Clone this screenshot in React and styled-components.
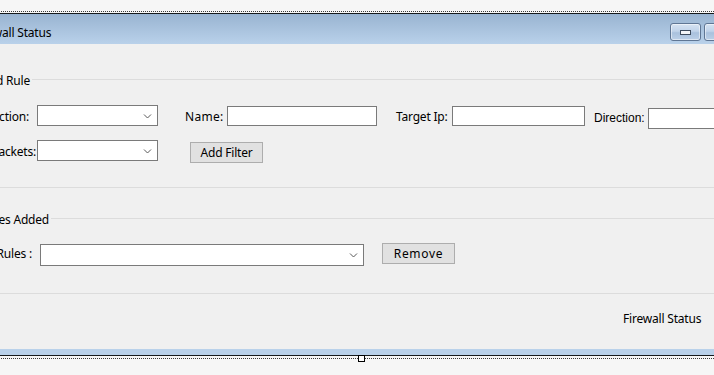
import React from "react";
import styled, { createGlobalStyle } from "styled-components";

const GlobalStyle = createGlobalStyle`
  html, body {
    margin: 0;
    padding: 0;
    background: #f6f6f6;
    overflow: hidden;
  }
  body {
    font-family: "Noto Sans", "Segoe UI", sans-serif;
    font-size: 12px;
    letter-spacing: -0.2px;
    color: #000;
  }
`;

const Designer = styled.div`
  width: 714px;
  height: 375px;
  overflow: hidden;
  padding-top: 11px;
  box-sizing: border-box;
`;

// the form is wider than the visible area; its left edge is scrolled off
const Frame = styled.div`
  width: 836px;
  margin-left: -60px;
`;

const DottedLine = styled.div`
  height: 0;
  border-top: 1px dotted #3a3a3a;
  margin-top: ${(p) => p.$mt || 0}px;
`;

const SolidLine = styled.div`
  height: 1px;
  background: #161a1c;
  margin-top: ${(p) => p.$mt || 0}px;
`;

const TitleBar = styled.div`
  height: 30px;
  display: flex;
  align-items: flex-start;
  background: linear-gradient(#99b4d1, #b9d1ea);
`;

const Title = styled.div`
  margin: 11px 0 0 33px;
  line-height: 16px;
`;

const CaptionButtons = styled.div`
  margin-left: auto;
  margin-right: 6px;
  padding-top: 9px;
  display: flex;
  gap: 3px;
`;

const CaptionButton = styled.div`
  width: ${(p) => p.$w || 31}px;
  height: 18px;
  box-sizing: border-box;
  border: 1px solid #5f7694;
  border-radius: 3px;
  background: linear-gradient(#d6e3f2 0%, #c0d3ea 45%, #a9c1dd 55%, #bcd0e8 100%);
  box-shadow: inset 0 0 0 1px rgba(255, 255, 255, 0.5);
  display: flex;
  align-items: center;
  justify-content: center;
`;

const MinGlyph = styled.div`
  width: 11px;
  height: 5px;
  box-sizing: border-box;
  border: 1px solid #3e4c5e;
  background: #f4f6f9;
  margin-top: 1px;
`;

const Body = styled.div`
  height: 305px;
  background: #f0f0f0;
  overflow: hidden;
`;

const Group = styled.div`
  margin-top: ${(p) => p.$mt}px;
  height: ${(p) => p.$h}px;
  box-sizing: border-box;
  border-bottom: 1px solid #dcdcdc;
`;

const GroupHeader = styled.div`
  height: 15px;
  display: flex;
  align-items: center;
`;

const GroupTitle = styled.div`
  width: ${(p) => p.$w}px;
  flex: none;
  text-align: right;
  line-height: 15px;
  white-space: nowrap;
  margin-top: 1px;
`;

const GroupLine = styled.div`
  flex: 1;
  height: 1px;
  margin-left: 2px;
  margin-top: -1px;
  background: #dcdcdc;
`;

const Row = styled.div`
  display: flex;
  align-items: flex-start;
  height: ${(p) => p.$h}px;
  margin-top: ${(p) => p.$mt || 0}px;
`;

const Label = styled.div`
  flex: none;
  width: ${(p) => p.$w}px;
  margin-left: ${(p) => p.$ml || 0}px;
  margin-top: ${(p) => p.$mt || 0}px;
  text-align: ${(p) => (p.$right ? "right" : "left")};
  line-height: 15px;
  white-space: nowrap;
  font-family: ${(p) => p.$font || "inherit"};
  letter-spacing: ${(p) => (p.$ls !== undefined ? p.$ls : -0.2)}px;
`;

const TextBox = styled.div`
  flex: none;
  width: ${(p) => p.$w}px;
  height: ${(p) => p.$h || 20}px;
  margin-left: ${(p) => p.$ml || 0}px;
  margin-top: ${(p) => p.$mt || 0}px;
  box-sizing: border-box;
  border: 1px solid #7a7a7a;
  background: #fff;
`;

const ComboBox = styled(TextBox)`
  display: flex;
  align-items: center;
  justify-content: flex-end;
  padding-right: 5px;
`;

const Button = styled.div`
  flex: none;
  width: ${(p) => p.$w}px;
  height: 21px;
  margin-left: ${(p) => p.$ml || 0}px;
  margin-top: ${(p) => p.$mt || 0}px;
  box-sizing: border-box;
  border: 1px solid #adadad;
  background: #e1e1e1;
  display: flex;
  align-items: center;
  justify-content: center;
  letter-spacing: ${(p) => (p.$ls !== undefined ? p.$ls : -0.2)}px;
`;

const StatusRow = styled.div`
  margin-top: 17px;
  padding-left: 683px;
  line-height: 15px;
  white-space: nowrap;
`;

const BottomBand = styled.div`
  height: 6px;
  background: #b9d1ea;
`;

const BottomEdge = styled.div`
  position: relative;
`;

const Handle = styled.div`
  position: absolute;
  top: 0;
  left: 418px;
  width: 7px;
  height: 7px;
  box-sizing: border-box;
  border: 1px solid #000;
  background: #fff;
`;

const Chevron = () => (
  <svg width="9" height="6" viewBox="0 0 9 6">
    <path d="M1 1.5 L4.5 5 L8 1.5" fill="none" stroke="#5a5a5a" strokeWidth="1" />
  </svg>
);

export default function App() {
  return (
    <Designer>
      <GlobalStyle />
      <Frame>
        <DottedLine />
        <SolidLine $mt={1} />
        <TitleBar>
          <Title>Firewall Status</Title>
          <CaptionButtons>
            <CaptionButton>
              <MinGlyph />
            </CaptionButton>
            <CaptionButton />
            <CaptionButton $w={32} />
          </CaptionButtons>
        </TitleBar>
        <Body>
          <Group $mt={28} $h={116}>
            <GroupHeader>
              <GroupTitle $w={90}>Add Rule</GroupTitle>
              <GroupLine />
            </GroupHeader>
            <Row $mt={18} $h={35}>
              <Label $w={89} $right $mt={4}>Direction:</Label>
              <ComboBox $w={121} $h={21} $ml={8}>
                <Chevron />
              </ComboBox>
              <Label $w={42} $ml={27} $mt={4} $ls={0.3}>Name:</Label>
              <TextBox $w={150} $mt={1} />
              <Label $w={56} $ml={19} $mt={4}>Target Ip:</Label>
              <TextBox $w={133} $mt={1} />
              <Label $w={54} $ml={9} $mt={6} $ls={0} $font={'"Liberation Sans", Arial, sans-serif'}>
                Direction:
              </Label>
              <TextBox $w={120} $h={21} $mt={3} />
            </Row>
            <Row $h={24}>
              <Label $w={96} $right $mt={4}>Packets:</Label>
              <ComboBox $w={121} $h={21} $ml={1}>
                <Chevron />
              </ComboBox>
              <Button $w={73} $ml={32} $mt={2}>Add Filter</Button>
            </Row>
          </Group>
          <Group $mt={23} $h={83}>
            <GroupHeader>
              <GroupTitle $w={109}>Rules Added</GroupTitle>
              <GroupLine />
            </GroupHeader>
            <Row $mt={17} $h={24}>
              <Label $w={92} $right $mt={3}>Rules :</Label>
              <ComboBox $w={324} $h={22} $ml={8} $mt={1}>
                <Chevron />
              </ComboBox>
              <Button $w={73} $ml={18} $ls={0.7}>Remove</Button>
            </Row>
          </Group>
          <StatusRow>Firewall Status</StatusRow>
        </Body>
        <BottomBand />
        <BottomEdge>
          <SolidLine />
          <DottedLine $mt={2} />
          <Handle />
        </BottomEdge>
      </Frame>
    </Designer>
  );
}
